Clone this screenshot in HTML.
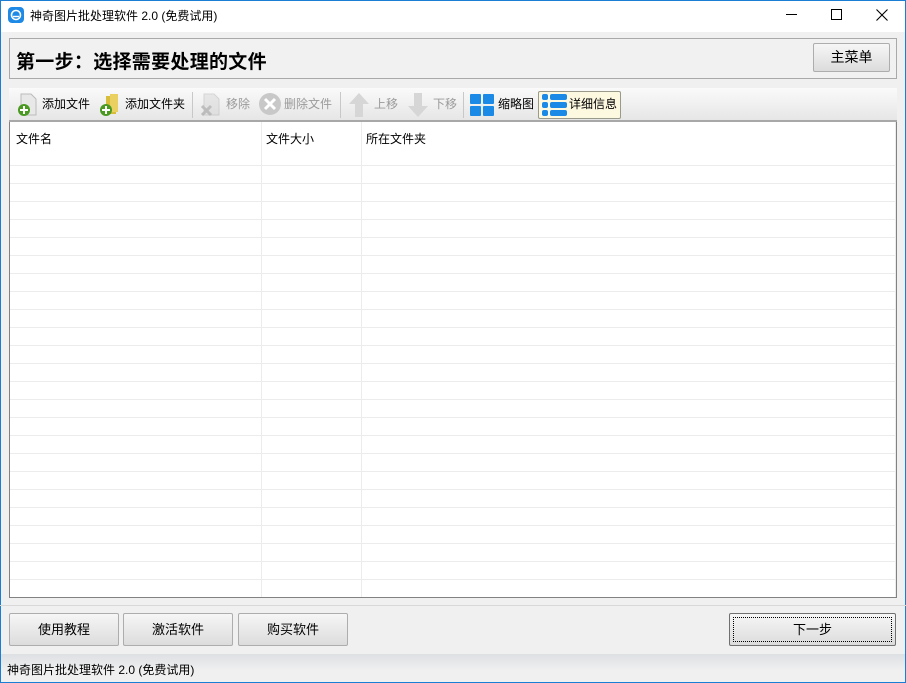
<!DOCTYPE html>
<html><head><meta charset="utf-8"><style>
*{margin:0;padding:0;box-sizing:border-box}
body{width:906px;height:683px;position:relative;overflow:hidden;background:#f0f0f0;font-family:"Liberation Sans","Noto Sans CJK SC",sans-serif;font-size:12px;color:#000}
.abs{position:absolute}
.btn{position:absolute;border:1px solid #adadad;border-radius:2px;background:linear-gradient(#f6f6f6,#dcdcdc);text-align:center;font-size:13px}
.tb{position:absolute;top:94px;font-size:12px;height:20px;line-height:20px}
.g{color:#9a9a9a}
.sep{position:absolute;top:92px;width:1px;height:26px;background:#c8c8c8}
</style></head><body>
<div class="abs" style="left:0;top:0;width:906px;height:32px;background:#fff"></div>
<div class="abs" style="left:0;top:0;width:1px;height:683px;background:#1a7fd4"></div>
<div class="abs" style="right:0;top:0;width:1px;height:683px;background:#1a7fd4"></div>
<div class="abs" style="left:0;bottom:0;width:906px;height:1px;background:#1a7fd4"></div>
<div class="abs" style="left:0;top:0;width:906px;height:1px;background:#1a7fd4"></div>
<svg class="abs" style="left:8px;top:7px" width="16" height="16"><rect width="16" height="16" rx="4" fill="#1e8ae6"/><circle cx="8" cy="8" r="4.5" fill="none" stroke="#fff" stroke-width="1.6"/><path d="M5 9.5h6" stroke="#fff" stroke-width="1.4"/></svg>
<div class="abs" style="left:30px;top:7px;font-size:12px">神奇图片批处理软件 2.0 (免费试用)</div>
<div class="abs" style="left:786px;top:14px;width:11px;height:1px;background:#000"></div>
<div class="abs" style="left:831px;top:9px;width:11px;height:11px;border:1px solid #000"></div>
<svg class="abs" style="left:876px;top:9px" width="12" height="12"><path d="M0.5 0.5L11.5 11.5M11.5 0.5L0.5 11.5" stroke="#000" stroke-width="1.1"/></svg>
<div class="abs" style="left:9px;top:38px;width:888px;height:41px;border:1px solid #a9a9a9;background:#f2f1f2"></div>
<div class="abs" style="left:16px;top:47px;font-size:19px;font-weight:bold;letter-spacing:0.3px">第一步：选择需要处理的文件</div>
<div class="btn" style="left:813px;top:43px;width:77px;height:29px;line-height:26px;font-size:14px">主菜单</div>
<div class="abs" style="left:9px;top:88px;width:888px;height:34px;background:linear-gradient(#fafafa,#e6e6e6);border-bottom:2px solid #a8a8a8"></div>
<svg class="abs" style="left:15px;top:93px" width="24" height="24"><path d="M6 1h10l5 5v16H6z" fill="#e8e8e8" stroke="#bbb"/><circle cx="9" cy="17" r="6" fill="#4a9a22"/><path d="M9 13v8M5 17h8" stroke="#fff" stroke-width="2"/></svg>
<div class="tb" style="left:42px">添加文件</div>
<svg class="abs" style="left:97px;top:93px" width="24" height="24"><path d="M9 3h10v18H9z" fill="#d8bd3a"/><path d="M13 1h8v18h-8z" fill="#e9d060"/><circle cx="9" cy="17" r="6" fill="#4a9a22"/><path d="M9 13v8M5 17h8" stroke="#fff" stroke-width="2"/></svg>
<div class="tb" style="left:125px">添加文件夹</div>
<div class="sep" style="left:192px"></div>
<svg class="abs" style="left:198px;top:93px" width="24" height="24" opacity=".35"><path d="M6 1h10l5 5v16H6z" fill="#ccc" stroke="#999"/><path d="M4 13l9 9M13 13l-9 9" stroke="#666" stroke-width="3"/></svg>
<div class="tb g" style="left:226px">移除</div>
<svg class="abs" style="left:258px;top:92px" width="24" height="24"><circle cx="12" cy="12" r="11" fill="#c8c8c8"/><path d="M7 7l10 10M17 7L7 17" stroke="#fff" stroke-width="3"/></svg>
<div class="tb g" style="left:284px">删除文件</div>
<div class="sep" style="left:340px"></div>
<svg class="abs" style="left:348px;top:92px" width="22" height="26"><path d="M11 1l10 11h-6v13H7V12H1z" fill="#d6d6d6"/></svg>
<div class="tb g" style="left:374px">上移</div>
<svg class="abs" style="left:407px;top:92px" width="22" height="26"><path d="M11 25L1 14h6V1h8v13h6z" fill="#d6d6d6"/></svg>
<div class="tb g" style="left:433px">下移</div>
<div class="sep" style="left:463px"></div>
<svg class="abs" style="left:470px;top:94px" width="24" height="22"><rect x="0" y="0" width="11" height="10" rx="1" fill="#1a8ae6"/><rect x="13" y="0" width="11" height="10" rx="1" fill="#1a8ae6"/><rect x="0" y="12" width="11" height="10" rx="1" fill="#1a8ae6"/><rect x="13" y="12" width="11" height="10" rx="1" fill="#1a8ae6"/></svg>
<div class="tb" style="left:498px">缩略图</div>
<div class="abs" style="left:538px;top:91px;width:83px;height:28px;border:1px solid #9a9a8a;border-radius:2px;background:#fdf8e0"></div>
<svg class="abs" style="left:542px;top:94px" width="25" height="22"><rect x="0" y="0" width="6" height="6" rx="2" fill="#1a8ae6"/><rect x="8" y="0" width="17" height="6" rx="2" fill="#1a8ae6"/><rect x="0" y="8" width="6" height="6" rx="2" fill="#1a8ae6"/><rect x="8" y="8" width="17" height="6" rx="2" fill="#1a8ae6"/><rect x="0" y="16" width="6" height="6" rx="2" fill="#1a8ae6"/><rect x="8" y="16" width="17" height="6" rx="2" fill="#1a8ae6"/></svg>
<div class="tb" style="left:569px">详细信息</div>
<div class="abs" style="left:9px;top:122px;width:888px;height:476px;border:1px solid #828282;border-top:none;background:#fff;
background-image:repeating-linear-gradient(#fff 0 17px,#ececec 17px 18px);background-position:0 26px;background-repeat:repeat-y"></div>
<div class="abs" style="left:10px;top:122px;width:886px;height:42px;background:#fff"></div>
<div class="abs" style="left:261px;top:122px;width:1px;height:475px;background:#ececec"></div>
<div class="abs" style="left:361px;top:122px;width:1px;height:475px;background:#ececec"></div>
<div class="abs" style="left:895px;top:122px;width:1px;height:475px;background:#ececec"></div>
<div class="abs" style="left:16px;top:130px">文件名</div>
<div class="abs" style="left:266px;top:130px">文件大小</div>
<div class="abs" style="left:366px;top:130px">所在文件夹</div>
<div class="abs" style="left:0;top:605px;width:906px;height:1px;background:#d8d8d8"></div>
<div class="btn" style="left:9px;top:613px;width:110px;height:33px;line-height:31px">使用教程</div>
<div class="btn" style="left:123px;top:613px;width:110px;height:33px;line-height:31px">激活软件</div>
<div class="btn" style="left:238px;top:613px;width:110px;height:33px;line-height:31px">购买软件</div>
<div class="btn" style="left:729px;top:613px;width:167px;height:33px;line-height:31px;border-color:#707070"><div style="position:absolute;left:3px;top:3px;right:3px;bottom:3px;border:1px dotted #000"></div>下一步</div>
<div class="abs" style="left:1px;top:654px;width:904px;height:28px;background:linear-gradient(#dde0e3,#f0f0f0 60%)"></div>
<div class="abs" style="left:7px;top:661px;font-size:12px">神奇图片批处理软件 2.0 (免费试用)</div>
</body></html>
